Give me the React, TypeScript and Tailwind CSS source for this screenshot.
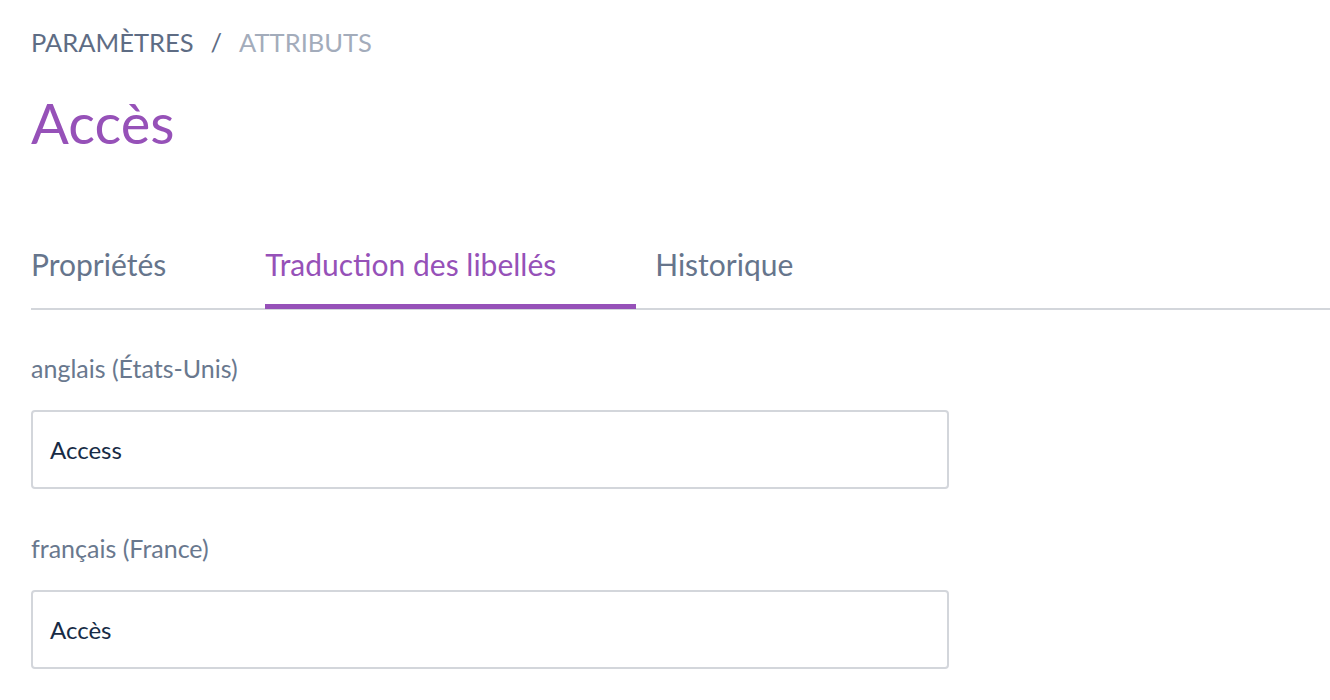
export default function App() {
  const tabs = ['Propriétés', 'Traduction des libellés', 'Historique'];
  const active = 1;
  const fields = [
    { label: 'anglais (États-Unis)', value: 'Access' },
    { label: 'français (France)', value: 'Accès' },
  ];

  return (
    <div className="min-h-screen bg-white pl-[31px] pt-[26px]" style={{ fontFamily: 'Lato, "Open Sans", sans-serif' }}>
      {/* Breadcrumb */}
      <div className="flex items-center text-[25.5px] leading-[32px] uppercase">
        <span className="text-[#5e6c84]">Paramètres</span>
        <span className="mx-[17px] text-[#5e6c84]">/</span>
        <span className="text-[#a3acbb]">Attributs</span>
      </div>

      <h1 className="mt-[29px] text-[56px] leading-[72px] text-[#9651b8]">Accès</h1>

      {/* Tabs */}
      <div className="mt-[87px] flex border-b-2 border-[#d3d6db]">
        {tabs.map((t, i) => (
          <div
            key={t}
            className={
              i === active
                ? 'mr-[19px] -mb-[1px] border-b-[5px] border-[#9651b8] pb-[22px] pr-[80px] text-[30px] leading-[36px] text-[#9651b8]'
                : 'mr-[19px] pb-[26px] pr-[80px] text-[30px] leading-[36px] text-[#66758c]'
            }
          >
            {t}
          </div>
        ))}
      </div>

      {/* Fields */}
      <div className="w-[918px] pt-[43px]">
        {fields.map(f => (
          <div key={f.label} className="mb-[44px]">
            <div className="text-[25px] leading-[30px] text-[#69788e]">{f.label}</div>
            <div className="mt-[27px] flex h-[79px] items-center rounded-[4px] border-2 border-[#d3d6db] px-[17px] text-[24px] text-[#172b45]">
              {f.value}
            </div>
          </div>
        ))}
      </div>
    </div>
  );
}
